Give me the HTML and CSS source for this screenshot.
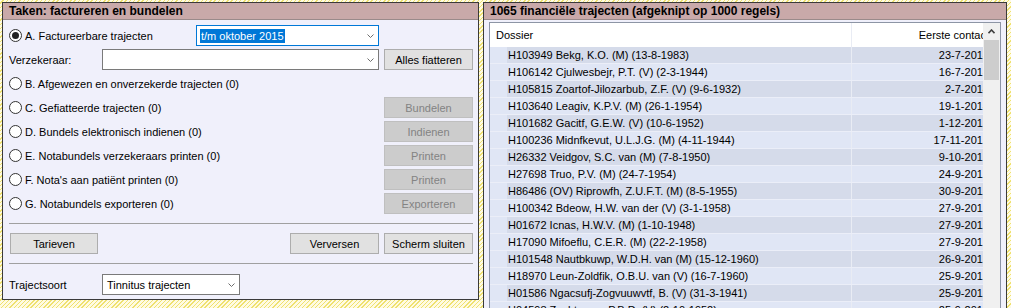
FILE: index.html
```html
<!DOCTYPE html>
<html lang="nl">
<head>
    <meta charset="UTF-8">
    <title>Factureren en bundelen</title>
    <link rel="stylesheet" href="styles.css">
</head>
<body>
    <div class="panel panel-left">
        <div class="panel-title">Taken: factureren en bundelen</div>
        <div class="panel-body">
            <div class="row">
                <label class="radio-label label-a"><span class="radio checked"></span>A. Factureerbare trajecten</label>
                <div class="combo combo-focus combo-period">
                    <span class="selected-text">t/m oktober 2015</span>
                    <svg class="chevron" width="7" height="4" viewBox="0 0 7 4"><polyline points="0.5,0.5 3.5,3.5 6.5,0.5" fill="none" stroke="#6d6d6d" stroke-width="1"/></svg>
                </div>
            </div>
            <div class="row">
                <span class="field-label">Verzekeraar:</span>
                <div class="combo combo-insurer">
                    <span></span>
                    <svg class="chevron" width="7" height="4" viewBox="0 0 7 4"><polyline points="0.5,0.5 3.5,3.5 6.5,0.5" fill="none" stroke="#6d6d6d" stroke-width="1"/></svg>
                </div>
                <button class="btn btn-next">Alles fiatteren</button>
            </div>
            <div class="row">
                <label class="radio-label"><span class="radio"></span>B. Afgewezen en onverzekerde trajecten (0)</label>
            </div>
            <div class="row">
                <label class="radio-label"><span class="radio"></span>C. Gefiatteerde trajecten (0)</label>
                <button class="btn btn-right" disabled>Bundelen</button>
            </div>
            <div class="row">
                <label class="radio-label"><span class="radio"></span>D. Bundels elektronisch indienen (0)</label>
                <button class="btn btn-right" disabled>Indienen</button>
            </div>
            <div class="row">
                <label class="radio-label"><span class="radio"></span>E. Notabundels verzekeraars printen (0)</label>
                <button class="btn btn-right" disabled>Printen</button>
            </div>
            <div class="row">
                <label class="radio-label"><span class="radio"></span>F. Nota's aan patiënt printen (0)</label>
                <button class="btn btn-right" disabled>Printen</button>
            </div>
            <div class="row">
                <label class="radio-label"><span class="radio"></span>G. Notabundels exporteren (0)</label>
                <button class="btn btn-right" disabled>Exporteren</button>
            </div>
            <div class="separator"></div>
            <div class="row">
                <button class="btn btn-tarieven">Tarieven</button>
                <button class="btn btn-right">Verversen</button>
                <button class="btn btn-next">Scherm sluiten</button>
            </div>
            <div class="separator"></div>
            <div class="row row-last">
                <span class="field-label">Trajectsoort</span>
                <div class="combo combo-type">
                    <span>Tinnitus trajecten</span>
                    <svg class="chevron" width="7" height="4" viewBox="0 0 7 4"><polyline points="0.5,0.5 3.5,3.5 6.5,0.5" fill="none" stroke="#6d6d6d" stroke-width="1"/></svg>
                </div>
            </div>
        </div>
    </div>

    <div class="panel panel-right">
        <div class="panel-title">1065 financiële trajecten (afgeknipt op 1000 regels)</div>
        <div class="panel-body-right">
            <div class="listbox">
                <div class="list-content">
                    <div class="list-header">
                        <div class="head-dossier">Dossier</div>
                        <div class="divider"></div>
                        <div class="cell-date">Eerste contact</div>
                    </div>
                    <div class="list-row"><div class="strip"></div><div class="cell-name">H103949 Bekg, K.O. (M) (13-8-1983)</div><div class="divider"></div><div class="cell-date">23-7-2014</div></div>
                    <div class="list-row"><div class="strip"></div><div class="cell-name">H106142 Cjulwesbejr, P.T. (V) (2-3-1944)</div><div class="divider"></div><div class="cell-date">16-7-2014</div></div>
                    <div class="list-row"><div class="strip"></div><div class="cell-name">H105815 Zoartof-Jilozarbub, Z.F. (V) (9-6-1932)</div><div class="divider"></div><div class="cell-date">2-7-2014</div></div>
                    <div class="list-row"><div class="strip"></div><div class="cell-name">H103640 Leagiv, K.P.V. (M) (26-1-1954)</div><div class="divider"></div><div class="cell-date">19-1-2014</div></div>
                    <div class="list-row"><div class="strip"></div><div class="cell-name">H101682 Gacitf, G.E.W. (V) (10-6-1952)</div><div class="divider"></div><div class="cell-date">1-12-2013</div></div>
                    <div class="list-row"><div class="strip"></div><div class="cell-name">H100236 Midnfkevut, U.L.J.G. (M) (4-11-1944)</div><div class="divider"></div><div class="cell-date">17-11-2013</div></div>
                    <div class="list-row"><div class="strip"></div><div class="cell-name">H26332 Veidgov, S.C. van (M) (7-8-1950)</div><div class="divider"></div><div class="cell-date">9-10-2013</div></div>
                    <div class="list-row"><div class="strip"></div><div class="cell-name">H27698 Truo, P.V. (M) (24-7-1954)</div><div class="divider"></div><div class="cell-date">24-9-2013</div></div>
                    <div class="list-row"><div class="strip"></div><div class="cell-name">H86486 (OV) Riprowfh, Z.U.F.T. (M) (8-5-1955)</div><div class="divider"></div><div class="cell-date">30-9-2013</div></div>
                    <div class="list-row"><div class="strip"></div><div class="cell-name">H100342 Bdeow, H.W. van der (V) (3-1-1958)</div><div class="divider"></div><div class="cell-date">27-9-2013</div></div>
                    <div class="list-row"><div class="strip"></div><div class="cell-name">H01672 Icnas, H.W.V. (M) (1-10-1948)</div><div class="divider"></div><div class="cell-date">27-9-2013</div></div>
                    <div class="list-row"><div class="strip"></div><div class="cell-name">H17090 Mifoeflu, C.E.R. (M) (22-2-1958)</div><div class="divider"></div><div class="cell-date">27-9-2013</div></div>
                    <div class="list-row"><div class="strip"></div><div class="cell-name">H101548 Nautbkuwp, W.D.H. van (M) (15-12-1960)</div><div class="divider"></div><div class="cell-date">26-9-2013</div></div>
                    <div class="list-row"><div class="strip"></div><div class="cell-name">H18970 Leun-Zoldfik, O.B.U. van (V) (16-7-1960)</div><div class="divider"></div><div class="cell-date">25-9-2013</div></div>
                    <div class="list-row"><div class="strip"></div><div class="cell-name">H01586 Ngacsufj-Zogvuuwvtf, B. (V) (31-3-1941)</div><div class="divider"></div><div class="cell-date">25-9-2013</div></div>
                    <div class="list-row"><div class="strip"></div><div class="cell-name">H04598 Zochtasuw, P.B.D. (V) (2-10-1952)</div><div class="divider"></div><div class="cell-date">25-9-2013</div></div>
                </div>
                <div class="scrollbar">
                    <div class="scroll-arrow">
                        <svg width="7" height="5" viewBox="0 0 7 5"><polyline points="0.5,4.2 3.5,1 6.5,4.2" fill="none" stroke="#404040" stroke-width="1.6"/></svg>
                    </div>
                    <div class="scroll-thumb"></div>
                </div>
            </div>
        </div>
    </div>
</body>
</html>
```

FILE: styles.css
```css
* {
    box-sizing: border-box;
}
body {
    margin: 0;
    height: 308px;
    overflow: hidden;
    padding: 2px;
    display: flex;
    gap: 4px;
    align-items: flex-start;
    font-family: "Liberation Sans", Arial, sans-serif;
    font-size: 11px;
    color: #000;
    background: repeating-linear-gradient(135deg, #fffbe2 0 2px, #efe170 2px 3px);
}
.panel {
    border: 1px solid #3a3a3a;
    background: #f0f0fb;
    display: flex;
    flex-direction: column;
}
.panel-left {
    width: 477px;
    height: 298px;
}
.panel-right {
    width: 524px;
    height: 330px;
}
.panel-title {
    height: 17px;
    line-height: 16px;
    padding-left: 6px;
    background: #c9a9a9;
    border-bottom: 1px solid #9a8a8a;
    font-size: 12px;
    font-weight: bold;
    white-space: nowrap;
}
.panel-body {
    display: flex;
    flex-direction: column;
    gap: 3px;
    padding: 5px 5px 0 6px;
}
.row {
    height: 21px;
    display: flex;
    align-items: center;
}
.row-last {
    margin-top: 1px;
}
.separator {
    height: 1px;
    margin: 6px 0;
    background: #a0a0a0;
}
.radio-label {
    display: flex;
    align-items: center;
    gap: 3px;
    white-space: nowrap;
}
.label-a {
    width: 187px;
}
.radio {
    width: 13px;
    height: 13px;
    border-radius: 50%;
    border: 1px solid #333;
    background: #fff;
    display: flex;
    align-items: center;
    justify-content: center;
}
.radio.checked::after {
    content: "";
    width: 7px;
    height: 7px;
    border-radius: 50%;
    background: #222;
}
.field-label {
    width: 93px;
}
.combo {
    height: 21px;
    border: 1px solid #7a7a7a;
    background: #fff;
    display: flex;
    align-items: center;
    justify-content: space-between;
    padding: 0 4px 0 4px;
    white-space: nowrap;
}
.combo-focus {
    border-color: #0078d7;
    padding-left: 3px;
}
.combo-period {
    width: 183px;
}
.combo-insurer {
    width: 277px;
}
.combo-type {
    width: 138px;
}
.selected-text {
    background: #0078d7;
    color: #fff;
    padding: 1px 1px;
}
.chevron {
    flex: none;
}
.btn {
    width: 89px;
    height: 21px;
    padding: 0;
    border: 1px solid #adadad;
    background: #e1e1e1;
    font-family: inherit;
    font-size: 11px;
    color: #000;
}
.btn:disabled {
    background: #cccccc;
    border-color: #bfbfbf;
    color: #838383;
}
.btn-right {
    margin-left: auto;
}
.btn-next {
    margin-left: 5px;
}
.btn-tarieven {
    width: 88px;
    margin-left: 1px;
}
.panel-body-right {
    flex: 1;
    padding: 2px 5px 0 5px;
    display: flex;
    min-height: 0;
}
.listbox {
    flex: 1;
    border: 1px solid #8d95a5;
    background: #e0e6f5;
    display: flex;
    overflow: hidden;
}
.list-content {
    width: 493px;
    overflow: hidden;
}
.list-header,
.list-row {
    width: 500px;
    display: grid;
    grid-template-columns: 17px 344px 1px 138px;
    white-space: nowrap;
}
.list-header {
    height: 24px;
    line-height: 24px;
    background: #fff;
}
.head-dossier {
    grid-column: 1 / 3;
    padding-left: 6px;
}
.list-row {
    height: 17px;
    line-height: 16px;
    border-bottom: 1px solid #ebeef8;
}
.list-row:nth-of-type(even) .cell-name,
.list-row:nth-of-type(even) .cell-date {
    background: #d5dbea;
}
.strip {
    background: #e0e6f5;
}
.cell-name {
    padding-left: 1px;
    overflow: hidden;
}
.divider {
    background: #e9ecf4;
}
.cell-date {
    text-align: right;
    padding-right: 1px;
}
.scrollbar {
    width: 17px;
    background: #f0f0f0;
    display: flex;
    flex-direction: column;
    align-items: center;
}
.scroll-arrow {
    height: 17px;
    display: flex;
    align-items: center;
    justify-content: center;
}
.scroll-thumb {
    width: 15px;
    height: 40px;
    background: #cdcdcd;
}
```
